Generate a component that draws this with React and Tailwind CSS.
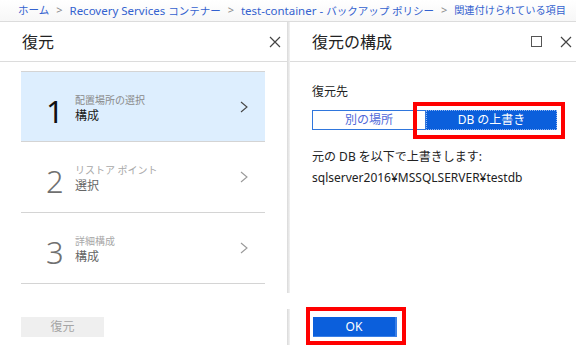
import React from "react";

const JP = { fontFamily: '"Noto Sans", "Noto Sans CJK JP", sans-serif' };

function XIcon({ color = "#444" }) {
  return (
    <svg width="12" height="12" viewBox="0 0 12 12" fill="none">
      <path d="M1 1L11 11M11 1L1 11" stroke={color} strokeWidth="1.2" />
    </svg>
  );
}

function Chevron({ color }) {
  return (
    <svg width="8" height="12" viewBox="0 0 8 12" fill="none">
      <path d="M1 1L7 6L1 11" stroke={color} strokeWidth="1.1" />
    </svg>
  );
}

function Sep() {
  return <span className="text-[#8a8a8a] text-[11px] mx-[7px]">&gt;</span>;
}

function Step({ n, sub, main, active, first }) {
  return (
    <div
      className={
        "flex items-center pl-[25px] pr-[17px] border-b border-[#d4d4d4] " +
        (first ? "border-t h-[71px] " : "h-[71px] ") +
        (active ? "bg-[#ddeefe]" : "bg-white")
      }
    >
      <div
        className={
          "w-[29px] text-[31px] leading-none mt-[9px] " +
          (active ? "text-[#111] font-normal" : "text-[#707070] font-light")
        }
      >
        {n}
      </div>
      <div className="flex flex-col flex-1 mt-[4px]">
        <span className={"text-[10px] leading-[13px] " + (active ? "text-[#8a8a8a]" : "text-[#a8a8a8]")}>{sub}</span>
        <span className={"text-[12px] leading-[16px] mt-[1px] " + (active ? "text-[#1a1a1a]" : "text-[#666]")}>{main}</span>
      </div>
      <Chevron color={active ? "#444" : "#999"} />
    </div>
  );
}

export default function App() {
  return (
    <div className="w-[576px] h-[345px] bg-white relative overflow-hidden flex flex-col" style={JP}>
      {/* breadcrumb */}
      <div className="h-[22px] border-b border-[#dcdcdc] flex items-center pl-[18px] text-[#3462cf] text-[11.5px] whitespace-nowrap bg-gradient-to-b from-white to-[#f7f7f7]">
        <span className="text-[10.5px]">ホーム</span>
        <Sep />
        <span>Recovery Services <span className="text-[10.5px]">コンテナー</span></span>
        <Sep />
        <span>test-container - <span className="text-[10.5px]">バックアップ ポリシー</span></span>
        <Sep />
        <span className="text-[10.2px]">関連付けられている項目</span>
      </div>

      <div className="flex flex-1">
        {/* left panel */}
        <div className="w-[287px] flex flex-col">
          <div className="h-[40px] border-b border-[#dcdcdc] flex items-center justify-between pl-[22px] pr-[6px]">
            <span className="text-[16px] text-[#222]">復元</span>
            <XIcon />
          </div>
          <div className="flex-1 pt-[9px] px-[21px] w-[265px] box-content">
            <div className="w-[244px]">
              <Step n="1" sub="配置場所の選択" main="構成" active first />
              <Step n="2" sub="リストア ポイント" main="選択" />
              <Step n="3" sub="詳細構成" main="構成" />
            </div>
          </div>
          <div className="h-[36px] pt-[8px] pl-[21px]">
            <div className="w-[83px] h-[20px] bg-[#efefef] flex items-center justify-center text-[12px] text-[#a5a5a5]">
              復元
            </div>
          </div>
        </div>

        {/* divider */}
        <div className="w-[3px] flex flex-col">
          <div className="h-[271px] bg-gradient-to-r from-[#d9d9d9] to-[#f3f3f3]" />
          <div className="h-[16px]" />
          <div className="flex-1 bg-gradient-to-r from-[#d9d9d9] to-[#f3f3f3]" />
        </div>

        {/* right panel */}
        <div className="flex-1 flex flex-col">
          <div className="h-[40px] border-b border-[#dcdcdc] flex items-center pl-[22px] pr-[4px]">
            <span className="text-[16px] text-[#222] flex-1">復元の構成</span>
            <div className="w-[11px] h-[11px] border border-[#555] mr-[18px]" />
            <XIcon />
          </div>
          <div className="flex-1 pt-[22px] pl-[22px] flex flex-col">
            <span className="text-[12px] leading-[16px] text-[#222]">復元先</span>
            <div className="flex mt-[10px] h-[20px]">
              <div className="w-[114px] border border-[#2f76dd] bg-white flex items-center justify-center text-[12px] text-[#5068d8]">
                別の場所
              </div>
              <div className="w-[131px] bg-[#0b5fdc] flex items-center justify-center text-[12px] text-white outline-1 outline-dotted outline-[#8fb4f0] -outline-offset-1">
                DB の上書き
              </div>
            </div>
            <span className="mt-[19px] text-[12px] leading-[16px] text-[#222]">元の DB を以下で上書きします:</span>
            <span className="mt-[5px] text-[12px] leading-[16px] text-[#222]">sqlserver2016¥MSSQLSERVER¥testdb</span>
          </div>
          <div className="h-[36px] pt-[8px] pl-[23px]">
            <div className="w-[84px] h-[20px] bg-[#0b5fdc] flex items-center justify-center text-[12px] text-white border-r-2 border-b border-[#3a7fe6]">
              OK
            </div>
          </div>
        </div>
      </div>

      {/* annotation boxes */}
      <div className="absolute left-[413px] top-[102px] w-[152px] h-[37px] border-4 border-[#ff0000]" />
      <div className="absolute left-[306px] top-[307px] w-[100px] h-[38px] border-4 border-[#ff0000]" />
    </div>
  );
}
